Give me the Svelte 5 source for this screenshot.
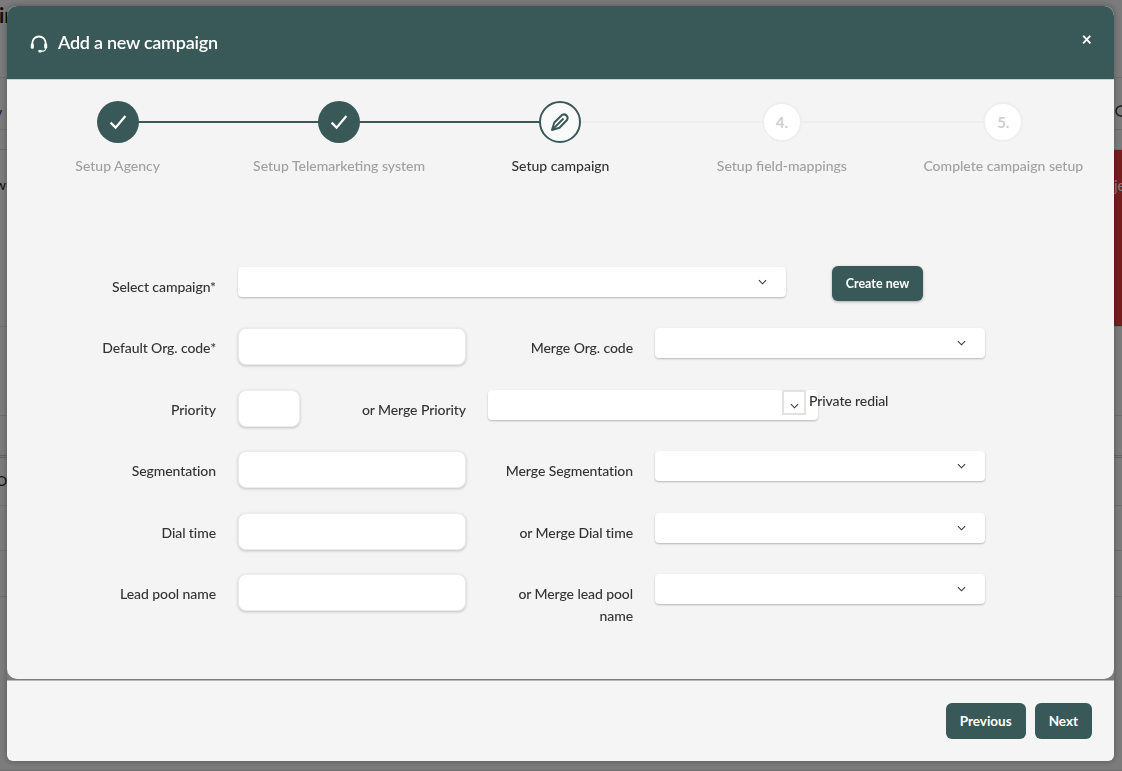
<script>
  const steps = [
    { label: 'Setup Agency', state: 'done' },
    { label: 'Setup Telemarketing system', state: 'done' },
    { label: 'Setup campaign', state: 'active' },
    { label: 'Setup field-mappings', state: 'todo', num: '4.' },
    { label: 'Complete campaign setup', state: 'todo', num: '5.' }
  ];
  const rows = [
    { label: 'Default Org. code*', merge: 'Merge Org. code' },
    { priority: true },
    { label: 'Segmentation', merge: 'Merge Segmentation' },
    { label: 'Dial time', merge: 'or Merge Dial time' },
    { label: 'Lead pool name', merge: 'or Merge lead pool name' }
  ];
  const behind = [
    { h: 78, l: 'ir', big: true, pad: 2, off: -1 },
    { h: 52, l: 'v', r: 'search', pad: 26, off: -5 },
    { h: 20 },
    { h: 177, l: 'w', r: 'je', red: true, pad: 27, off: -5 },
    { h: 89 },
    { h: 42, shade: true },
    { h: 48, l: 'O', pad: 15, off: -4 },
    { h: 45 },
    { h: 46 },
    { h: 174 }
  ];
</script>

{#snippet chevron()}
  <svg class="chev" viewBox="0 0 10 6" width="9" height="6" aria-hidden="true">
    <path d="M1 1l4 4 4-4" fill="none" stroke="#333" stroke-width="1.2" />
  </svg>
{/snippet}

<div class="behind">
  {#each behind as row}
    <div class="brow" class:shade={row.shade} style="height:{row.h}px">
      <div class="bleft" class:big={row.big} style="padding-top:{row.pad ?? 0}px;margin-left:{row.off ?? 0}px">{row.l ?? ''}</div>
      {#if row.red}
        <div class="bred">{row.r}</div>
      {:else if row.r}
        <svg class="bsearch" viewBox="0 0 14 14" width="14" height="14" aria-hidden="true">
          <circle cx="6" cy="6" r="5" fill="none" stroke="#333" stroke-width="1.5" />
          <path d="M9.500 9.500l3.500 3.500" stroke="#333" stroke-width="1.5" />
        </svg>
      {/if}
    </div>
  {/each}
</div>
<div class="backdrop"></div>

<div class="modal">
  <div class="main">
    <header class="head">
      <svg class="headset" viewBox="0 0 18 18" width="18" height="18" aria-hidden="true">
        <path d="M2.300 10.500V8.200a6.700 6.700 0 0 1 13.400 0v2.300" fill="none" stroke="#fff" stroke-width="1.8" />
        <rect x="0.800" y="8.600" width="3" height="5.200" rx="1.300" fill="#fff" />
        <rect x="14.200" y="8.600" width="3" height="5.200" rx="1.300" fill="#fff" />
        <path d="M15.700 13.500c0 1.800-1.800 2.800-4.600 2.800" fill="none" stroke="#fff" stroke-width="1.200" />
        <rect x="8.200" y="15" width="3.800" height="2.400" rx="1.100" fill="#fff" />
      </svg>
      <h2>Add a new campaign</h2>
      <span class="close">×</span>
    </header>

    <ol class="steps">
      {#each steps as s, i}
        <li class="step {s.state}">
          {#if i < steps.length - 1}
            <span class="line" class:on={i < 2}></span>
          {/if}
          <span class="dot">
            {#if s.state === 'done'}
              <svg viewBox="0 0 18 16" width="18" height="16" aria-hidden="true">
                <path d="M1.600 8.600l5 5L16.400 2" fill="none" stroke="#fff" stroke-width="2.2" />
              </svg>
            {:else if s.state === 'active'}
              <svg viewBox="0 0 20 20" width="20" height="20" aria-hidden="true">
                <path d="M2 18L4.300 10.500 12 3Q14.500 1.500 16.500 3.500 18.500 5.500 17 8L9.500 15.700z" fill="none" stroke="#395958" stroke-width="2" stroke-linejoin="round" />
                <path d="M3 17L13.500 6.500" fill="none" stroke="#395958" stroke-width="1.800" />
              </svg>
            {:else}
              {s.num}
            {/if}
          </span>
          <span class="cap">{s.label}</span>
        </li>
      {/each}
    </ol>

    <form class="form">
      <div class="row first">
        <label class="lab">Select campaign*</label>
        <div class="sel wide">{@render chevron()}</div>
        <button type="button" class="btn create">Create new</button>
      </div>

      {#each rows as r}
        {#if r.priority}
          <div class="row prio">
            <label class="lab">Priority</label>
            <input class="inp" />
            <label class="lab">or Merge Priority</label>
            <div class="sel"><span class="box">{@render chevron()}</span></div>
            <span class="private">Private redial</span>
          </div>
        {:else}
          <div class="row">
            <label class="lab">{r.label}</label>
            <input class="inp" />
            <label class="lab">{r.merge}</label>
            <div class="sel">{@render chevron()}</div>
          </div>
        {/if}
      {/each}
    </form>
  </div>

  <footer class="foot">
    <button type="button" class="btn">Previous</button>
    <button type="button" class="btn">Next</button>
  </footer>
</div>

<style>
  :global(body) {
    margin: 0;
    background: #fff;
    font-family: Lato, "Open Sans", sans-serif;
    color: #333;
  }
  .behind {
    height: 771px;
    overflow: hidden;
    background: #f6f6f6;
  }
  .brow {
    box-sizing: border-box;
    display: flex;
    justify-content: space-between;
    align-items: flex-start;
    border-bottom: 1px solid #dcdcdc;
    font-size: 14px;
    line-height: 16px;
    color: #222;
  }
  .brow.shade {
    border-bottom: 3px double #c8c8c8;
  }
  .bleft {
    white-space: nowrap;
  }
  .bleft.big {
    font-size: 21px;
    line-height: 26px;
    font-weight: 700;
  }
  .bred {
    align-self: stretch;
    width: 8px;
    background: #e83c3c;
    color: #fff;
    padding-top: 27px;
    overflow: hidden;
    box-sizing: border-box;
    font-size: 15px;
  }
  .bsearch {
    margin: 27px -7px 0 0;
  }
  .backdrop {
    position: fixed;
    inset: 0;
    background: rgba(0, 0, 0, 0.5);
  }
  .modal {
    position: fixed;
    left: 7px;
    top: 6px;
    width: 1107px;
    height: 755px;
    display: flex;
    flex-direction: column;
    box-shadow: 0 0 6px rgba(0, 0, 0, 0.3);
    border-radius: 8px 8px 6px 6px;
  }
  .main {
    height: 673px;
    background: #f4f4f4;
    border-radius: 10px;
    overflow: hidden;
    flex: none;
  }
  .head {
    height: 74px;
    box-sizing: border-box;
    background: #395958;
    border-bottom: 1px solid #c9d3d2;
    display: flex;
    align-items: center;
    color: #fff;
    padding: 0 22px 0 23px;
  }
  .headset {
    margin: 2px 10px 0 0;
  }
  .head h2 {
    margin: 0 0 1px;
    font-size: 18px;
    font-weight: 600;
    flex: 1;
    letter-spacing: -0.25px;
  }
  .close {
    font-size: 18px;
    font-weight: 700;
    line-height: 1;
    margin-bottom: 7px;
  }
  .steps {
    list-style: none;
    margin: 0;
    padding: 20.5px 0 0;
    display: grid;
    grid-template-columns: repeat(5, 1fr);
    height: 186.5px;
    box-sizing: border-box;
  }
  .step {
    position: relative;
    display: flex;
    flex-direction: column;
    align-items: center;
    font-size: 14px;
    font-weight: 500;
    color: #a0a0a0;
  }
  .line {
    position: absolute;
    left: 50%;
    width: 100%;
    top: 20px;
    height: 2px;
    background: #eeeeee;
  }
  .line.on {
    background: #395958;
  }
  .dot {
    position: relative;
    box-sizing: border-box;
    width: 42px;
    height: 42px;
    border-radius: 50%;
    display: flex;
    align-items: center;
    justify-content: center;
  }
  .done .dot {
    background: #395958;
  }
  .active .dot {
    border: 2px solid #395958;
    background: #fafafa;
  }
  .todo .dot {
    width: 40px;
    height: 40px;
    margin: 1px 0;
    background: #fff;
    border: 2px solid #eeeeee;
    color: #cfcfcf;
    font-size: 15px;
    font-weight: 700;
  }
  .active .cap {
    color: #333;
  }
  .cap {
    margin-top: 13px;
    line-height: 20px;
  }
  .row {
    display: grid;
    grid-template-columns: 209px 228px 145px 330px;
    column-gap: 22px;
    height: 61.5px;
    align-items: start;
  }
  .row.first {
    grid-template-columns: 209px 548px 91px;
  }
  .row.prio {
    grid-template-columns: 209px 62px 144px 330px auto;
  }
  .lab {
    text-align: right;
    font-size: 14px;
    font-weight: 500;
    line-height: 22px;
    padding-top: 9px;
    letter-spacing: -0.08px;
    color: #333;
  }
  .inp {
    box-sizing: border-box;
    width: 100%;
    height: 37px;
    border: 1px solid #ececec;
    border-radius: 8px;
    background: #fff;
    box-shadow: 0 1px 3px rgba(0, 0, 0, 0.22);
    padding: 0 8px;
  }
  .sel {
    box-sizing: border-box;
    height: 30px;
    background: #fff;
    border-radius: 4px;
    box-shadow: 0 1px 2px rgba(0, 0, 0, 0.25);
    display: flex;
    align-items: center;
    justify-content: flex-end;
    padding-right: 19px;
  }
  .box {
    box-sizing: border-box;
    width: 24px;
    height: 25px;
    margin: 0 -7px 4px 0;
    border: 2px solid #e2e2de;
    display: flex;
    align-items: flex-end;
    justify-content: center;
    padding-bottom: 4px;
  }
  .row.first .btn {
    margin: -1px 0 0 24px;
    height: 35px;
    box-shadow: 0 1px 3px rgba(0, 0, 0, 0.3);
    padding: 0;
    width: 91px;
    font-size: 12.5px;
  }
  .private {
    margin-left: -31px;
    font-size: 14px;
    font-weight: 500;
    line-height: 22px;
    white-space: nowrap;
    letter-spacing: -0.1px;
  }
  .foot {
    margin-top: 1px;
    flex: 1;
    background: #f5f5f5;
    border-top: 1px solid #b9b9b9;
    border-radius: 0 0 6px 6px;
    display: flex;
    justify-content: flex-end;
    align-items: flex-start;
    gap: 9px;
    padding: 22px 22px 0 0;
    box-sizing: border-box;
  }
  .btn {
    height: 36px;
    padding: 0 14px;
    border: none;
    border-radius: 6px;
    background: #395958;
    color: #fff;
    font-family: inherit;
    font-size: 13.5px;
    font-weight: 700;
  }
</style>
